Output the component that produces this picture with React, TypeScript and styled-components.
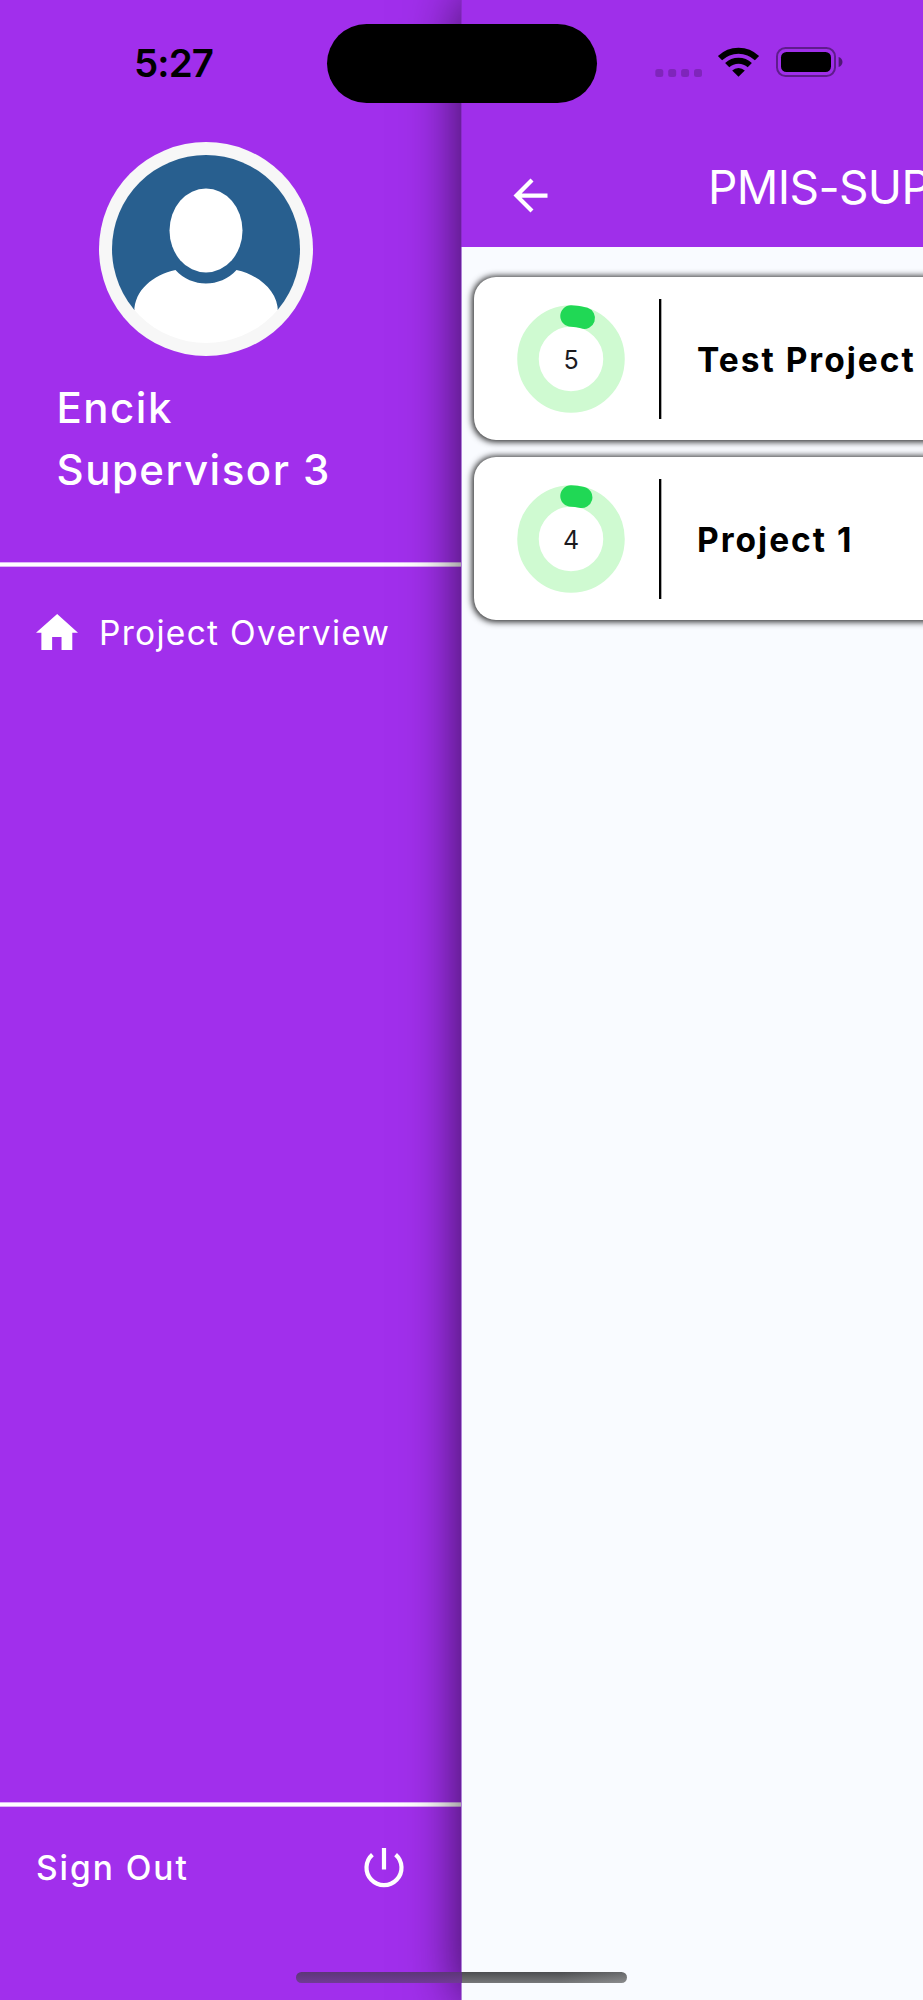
import React from "react";
import styled, { createGlobalStyle } from "styled-components";

const GlobalStyle = createGlobalStyle`
  * { box-sizing: border-box; }
  body { margin: 0; }
`;

const Screen = styled.div`
  position: relative;
  display: flex;
  width: 923px;
  height: 2000px;
  overflow: hidden;
  background: #a12fec;
  font-family: Inter, "Liberation Sans", sans-serif;
  white-space: nowrap;
`;

/* Drawer */
const Drawer = styled.aside`
  display: flex;
  flex-direction: column;
  flex: none;
  width: 461px;
  height: 2000px;
  color: #fff;
`;

const Profile = styled.header`
  display: flex;
  flex-direction: column;
  height: 562px;
  padding-top: 142px;
`;

const Avatar = styled.svg`
  display: block;
  flex: none;
  width: 214px;
  height: 214px;
  margin-left: 99px;
`;

const UserName = styled.div`
  margin: 21px 0 0 56.5px;
  font-size: 42px;
  font-weight: 500;
  line-height: 62px;
  letter-spacing: 1.5px;
`;

const Rule = styled.div`
  flex: none;
  height: 5px;
  border: solid rgba(255, 255, 255, 0.65);
  border-width: 1px 0;
  background: #fff;
  background-clip: padding-box;
`;

const Menu = styled.nav`
  flex: 1;
  padding: 39px 0 0 36px;
`;

const MenuItem = styled.div`
  display: flex;
  align-items: center;
  height: 52px;
  gap: 21px;
  font-size: 33.5px;
  letter-spacing: 1.3px;
`;

const MenuLabel = styled.span`
  padding-top: 2px;
`;

const HomeIcon = styled.svg`
  flex: none;
  width: 42px;
  height: 36px;
`;

const SignOut = styled.footer`
  display: flex;
  align-items: center;
  justify-content: space-between;
  height: 193px;
  padding: 0 56px 74px 36px;
  font-size: 33.5px;
  font-weight: 500;
  letter-spacing: 1.95px;
`;

const SignOutLabel = styled.span`
  padding-top: 3px;
`;

const PowerIcon = styled.svg`
  width: 42px;
  height: 42px;
`;

/* Page pushed aside by the drawer */
const Page = styled.main`
  position: relative;
  flex: none;
  width: 923px;
  height: 2000px;
  background: #f9fbff;
  box-shadow: 0 0 52px rgba(0, 0, 0, 0.68);
`;

const AppBar = styled.div`
  display: flex;
  align-items: flex-start;
  height: 247px;
  padding: 170px 0 0 43px;
  border-left: 1px solid #8b2ccb;
  background: #9f2fea;
  color: #fff;
`;

const BackIcon = styled.svg`
  flex: none;
  width: 51px;
  height: 51px;
`;

const Title = styled.h1`
  margin: -11px 0 0 152px;
  font-size: 46px;
  font-weight: 400;
  line-height: 56px;
  letter-spacing: -0.6px;
`;

const Projects = styled.section`
  display: flex;
  flex-direction: column;
  gap: 17px;
  height: 1753px;
  padding: 30px 12px;
  border-left: 1px solid #b083d8;
`;

const Card = styled.article`
  display: flex;
  align-items: center;
  flex: none;
  height: 163px;
  padding-left: 43px;
  border-radius: 22px;
  background: #fff;
  box-shadow: 0 0.6px 6px 1.2px rgba(0, 0, 0, 0.82);
`;

const Gauge = styled.div`
  display: grid;
  place-items: center;
  flex: none;
  width: 108px;
  height: 108px;
  > * { grid-area: 1 / 1; }
`;

const GaugeValue = styled.span`
  padding-top: 3px;
  color: #1c1b1f;
  font-size: 25px;
  font-weight: 400;
`;

const Divider = styled.div`
  width: 3px;
  height: 120px;
  margin: 0 35px 0 34px;
  border-right: 1px solid #aaa;
  background: #000;
`;

const ProjectName = styled.h2`
  margin: 0;
  padding-top: 3px;
  color: #000;
  font-size: 33.5px;
  font-weight: 700;
  letter-spacing: 2px;
`;

/* System overlays */
const StatusBar = styled.div`
  position: absolute;
  inset: 0 0 auto 0;
  display: flex;
  height: 104px;
  padding-left: 134px;
`;

const Clock = styled.div`
  width: 193px;
  padding-top: 40px;
  font-size: 38.5px;
  font-weight: 600;
  line-height: 46px;
  letter-spacing: -0.9px;
`;

const Island = styled.div`
  width: 270px;
  height: 79px;
  margin-top: 24px;
  border-radius: 40px;
  background: #000;
`;

const StatusIcons = styled.svg`
  width: 190px;
  height: 32px;
  margin: 46px 0 0 57px;
`;

const HomeIndicator = styled.div`
  position: absolute;
  left: 296px;
  top: 1972px;
  width: 331px;
  height: 11px;
  border-radius: 6px;
  background:
    linear-gradient(90deg, transparent 80%, rgba(255, 255, 255, 0.15)),
    linear-gradient(#5c3777, #703b95) 0 0 / 166px 100% no-repeat,
    linear-gradient(#4c4d50, #77787a) 166px 0 / 165px 100% no-repeat;
`;

const RADIUS = 43;

function ProgressGauge({ value }: { value: number }) {
  const length = 2 * Math.PI * RADIUS;
  return (
    <Gauge>
      <svg width="108" height="108" viewBox="0 0 108 108" fill="none" strokeWidth="21.5">
        <circle cx="54" cy="54" r={RADIUS} stroke="#cffad1" />
        <circle
          cx="54"
          cy="54"
          r={RADIUS}
          stroke="#20d855"
          strokeLinecap="round"
          strokeDasharray={`${(length * value) / 100} ${length}`}
          transform="rotate(-90 54 54)"
        />
      </svg>
      <GaugeValue>{value}</GaugeValue>
    </Gauge>
  );
}

const projects = [
  { name: "Test Project", progress: 5 },
  { name: "Project 1", progress: 4 },
];

export default function App() {
  return (
    <>
      <GlobalStyle />
      <Screen>
        <Drawer>
          <Profile>
            <Avatar viewBox="0 0 214 214">
              <defs>
                <clipPath id="portrait">
                  <circle cx="107" cy="107" r="94" />
                </clipPath>
              </defs>
              <circle cx="107" cy="107" r="107" fill="#f7f7f7" />
              <g clipPath="url(#portrait)">
                <rect width="214" height="168" fill="#285f8f" />
                <ellipse cx="107" cy="88.5" rx="36.5" ry="42" fill="#fff" />
                <path
                  d="M35.3 170C35.3 148 54 133 76.5 128C93 146 121 146 137.5 128C160 133 179 149 179 170V214H35.3Z"
                  fill="#fff"
                />
              </g>
            </Avatar>
            <UserName>
              Encik
              <br />
              Supervisor 3
            </UserName>
          </Profile>
          <Rule />
          <Menu>
            <MenuItem>
              <HomeIcon viewBox="0 0 125 108" preserveAspectRatio="none" fill="#fff">
                <path d="M63 0L125 56H108V108H76V69H48V108H16V56H0Z" />
              </HomeIcon>
              <MenuLabel>Project Overview</MenuLabel>
            </MenuItem>
          </Menu>
          <Rule />
          <SignOut>
            <SignOutLabel>Sign Out</SignOutLabel>
            <PowerIcon viewBox="0 0 42 42" fill="none" stroke="#fff" strokeWidth="4.2">
              <path d="M21 2V23.5M9.4 8.6A17.5 17.5 0 1 0 32.6 8.6" />
            </PowerIcon>
          </SignOut>
        </Drawer>

        <Page>
          <AppBar>
            <BackIcon viewBox="0 0 24 24" fill="#fff">
              <path d="M20 11H7.83l5.59-5.59L12 4l-8 8 8 8 1.41-1.41L7.83 13H20v-2z" />
            </BackIcon>
            <Title>PMIS-SUPERVISOR</Title>
          </AppBar>
          <Projects>
            {projects.map((project) => (
              <Card key={project.name}>
                <ProgressGauge value={project.progress} />
                <Divider />
                <ProjectName>{project.name}</ProjectName>
              </Card>
            ))}
          </Projects>
        </Page>

        <StatusBar>
          <Clock>5:27</Clock>
          <Island />
          <StatusIcons viewBox="654 46 190 32">
            <g fill="#000" fillOpacity="0.2">
              <rect x="655.3" y="69" width="8" height="8" rx="2.5" />
              <rect x="668.2" y="69" width="8" height="8" rx="2.5" />
              <rect x="681.1" y="69" width="8" height="8" rx="2.5" />
              <rect x="694" y="69" width="8" height="8" rx="2.5" />
            </g>
            <g fill="none" stroke="#000" strokeWidth="6">
              <path d="M720 58.2A26.6 26.6 0 0 1 757 58.2" />
              <path d="M727.2 65.2A16.3 16.3 0 0 1 749.8 65.2" />
            </g>
            <path d="M732.2 70.6A9 9 0 0 1 744.8 70.6L738.5 76.8Z" />
            <rect x="777" y="48" width="58" height="28" rx="8.5" fill="none" stroke="#000" strokeOpacity="0.4" strokeWidth="2" />
            <rect x="781" y="52" width="50" height="20" rx="5.5" />
            <path d="M838.6 57C843.8 58.5 843.8 65.5 838.6 67Z" fillOpacity="0.5" />
          </StatusIcons>
        </StatusBar>
        <HomeIndicator />
      </Screen>
    </>
  );
}
